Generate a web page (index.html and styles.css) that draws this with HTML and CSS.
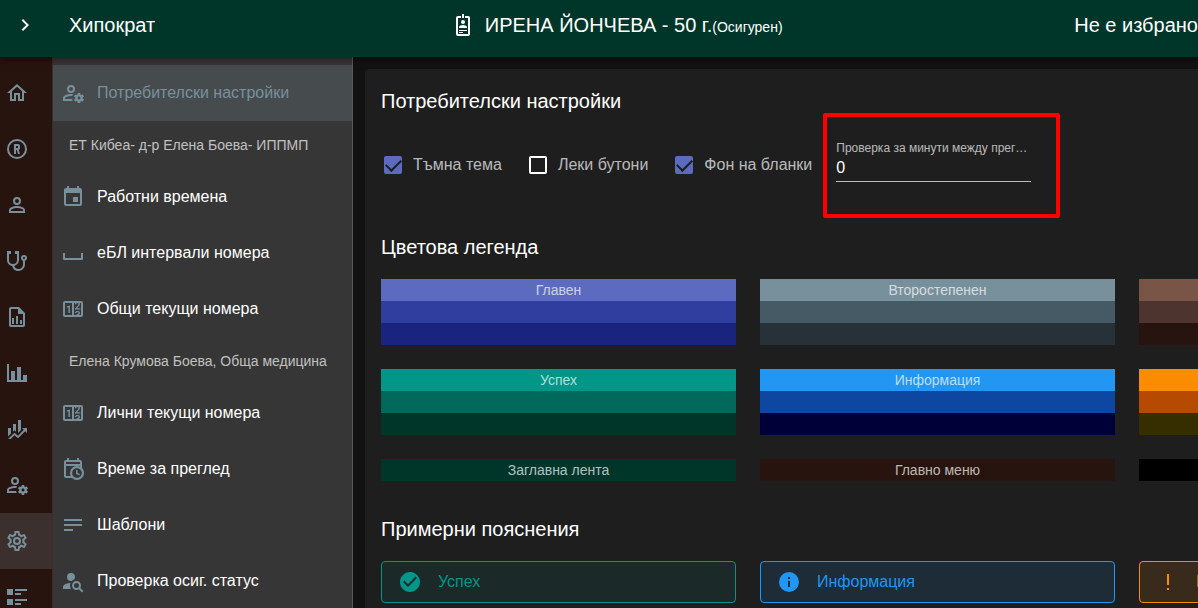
FILE: index.html
```html
<!DOCTYPE html>
<html lang="bg">
<head>
    <meta charset="UTF-8">
    <meta name="viewport" content="width=device-width, initial-scale=1.0">
    <title>Хипократ</title>
    <link rel="stylesheet" href="styles.css">
</head>
<body>
    <header class="app-bar">
        <button type="button" class="menu-toggle" aria-label="Меню">
            <svg class="icon" viewBox="0 0 24 24"><path d="M8.59,16.58L13.17,12L8.59,7.41L10,6L16,12L10,18L8.59,16.58Z"/></svg>
        </button>
        <div class="app-title">Хипократ</div>
        <div class="patient">
            <svg class="icon" viewBox="0 0 24 24"><path d="M17,3H14V5H17V21H7V5H10V3H7A2,2 0 0,0 5,5V21A2,2 0 0,0 7,23H17A2,2 0 0,0 19,21V5A2,2 0 0,0 17,3M12,7A2,2 0 0,1 14,9A2,2 0 0,1 12,11A2,2 0 0,1 10,9A2,2 0 0,1 12,7M16,15H8V14C8,12.67 10.67,12 12,12C13.33,12 16,12.67 16,14V15M16,18H8V17H16V18M12,20H8V19H12V20M13,5H11V1H13V5Z"/></svg>
            <span>ИРЕНА ЙОНЧЕВА - 50 г.<small>(Осигурен)</small></span>
        </div>
        <div class="status">Не е избрано</div>
    </header>

    <div class="layout">
        <nav class="rail">
            <a href="#" aria-label="Начало"><svg class="icon" viewBox="0 0 24 24"><path d="M12 5.69L17 10.19V18H15V12H9V18H7V10.19L12 5.69M12 3L2 12H5V20H11V14H13V20H19V12H22L12 3Z"/></svg></a>
            <a href="#" aria-label="Регистър"><svg class="icon" viewBox="0 0 24 24"><path d="M12,2A10,10 0 0,1 22,12A10,10 0 0,1 12,22A10,10 0 0,1 2,12A10,10 0 0,1 12,2M12,4A8,8 0 0,0 4,12A8,8 0 0,0 12,20A8,8 0 0,0 20,12A8,8 0 0,0 12,4M9,7H13A2,2 0 0,1 15,9V11C15,11.84 14.5,12.55 13.76,12.85L15,17H13L11.8,13H11V17H9V7M11,9V11H13V9H11Z"/></svg></a>
            <a href="#" aria-label="Пациент"><svg class="icon" viewBox="0 0 24 24"><path d="M12,4A4,4 0 0,1 16,8A4,4 0 0,1 12,12A4,4 0 0,1 8,8A4,4 0 0,1 12,4M12,6A2,2 0 0,0 10,8A2,2 0 0,0 12,10A2,2 0 0,0 14,8A2,2 0 0,0 12,6M12,13C14.67,13 20,14.33 20,17V20H4V17C4,14.33 9.33,13 12,13M12,14.9C9.03,14.9 5.9,16.36 5.9,17V18.1H18.1V17C18.1,16.36 14.97,14.9 12,14.9Z"/></svg></a>
            <a href="#" aria-label="Прегледи"><svg class="icon" viewBox="0 0 24 24"><path d="M19,8C19.56,8 20,8.43 20,9A1,1 0 0,1 19,10C18.43,10 18,9.55 18,9C18,8.43 18.43,8 19,8M2,2V11C2,13.96 4.19,16.5 7.14,16.91C7.76,19.92 10.42,22 13.5,22A6.5,6.5 0 0,0 20,15.5V11.81C21.16,11.39 22,10.29 22,9A3,3 0 0,0 19,6A3,3 0 0,0 16,9C16,10.29 16.84,11.4 18,11.81V15.41C18,17.91 16,19.91 13.5,19.91C11.5,19.91 9.82,18.7 9.22,16.9C12,16.3 14,13.8 14,11V2H10V5H12V11A4,4 0 0,1 8,15A4,4 0 0,1 4,11V5H6V2H2Z"/></svg></a>
            <a href="#" aria-label="Отчети"><svg class="icon" viewBox="0 0 24 24"><path d="M14 2H6C4.89 2 4 2.9 4 4V20C4 21.11 4.89 22 6 22H18C19.11 22 20 21.11 20 20V8L14 2M18 20H6V4H13V9H18V20M9 13V19H7V13H9M15 15V19H17V15H15M11 11V19H13V11H11Z"/></svg></a>
            <a href="#" aria-label="Статистика"><svg class="icon" viewBox="0 0 24 24"><path d="M22,21H2V3H4V19H6V10H10V19H12V6H16V19H18V14H22V21Z"/></svg></a>
            <a href="#" aria-label="Финанси"><svg class="icon" viewBox="0 0 24 24"><path d="M6,16.5L3,19.44V11H6M11,14.66L9.43,13.32L8,14.64V7H11M16,13L13,16V3H16M18.81,12.81L17,11H22V16L20.21,14.21L13,21.36L9.53,18.34L5.75,22H3L9.47,15.66L13,18.64"/></svg></a>
            <a href="#" aria-label="Потребители"><svg class="icon" viewBox="0 0 24 24"><use href="#account-cog"/></svg></a>
            <a href="#" class="active" aria-label="Настройки"><svg class="icon" viewBox="0 0 24 24"><path d="M12,8A4,4 0 0,1 16,12A4,4 0 0,1 12,16A4,4 0 0,1 8,12A4,4 0 0,1 12,8M12,10A2,2 0 0,0 10,12A2,2 0 0,0 12,14A2,2 0 0,0 14,12A2,2 0 0,0 12,10M10,22C9.75,22 9.54,21.82 9.5,21.58L9.13,18.93C8.5,18.68 7.96,18.34 7.44,17.94L4.95,18.95C4.73,19.03 4.46,18.95 4.34,18.73L2.34,15.27C2.21,15.05 2.27,14.78 2.46,14.63L4.57,12.97L4.5,12L4.57,11L2.46,9.37C2.27,9.22 2.21,8.95 2.34,8.73L4.34,5.27C4.46,5.05 4.73,4.96 4.95,5.05L7.44,6.05C7.96,5.66 8.5,5.32 9.13,5.07L9.5,2.42C9.54,2.18 9.75,2 10,2H14C14.25,2 14.46,2.18 14.5,2.42L14.87,5.07C15.5,5.32 16.04,5.66 16.56,6.05L19.05,5.05C19.27,4.96 19.54,5.05 19.66,5.27L21.66,8.73C21.79,8.95 21.73,9.22 21.54,9.37L19.43,11L19.5,12L19.43,13L21.54,14.63C21.73,14.78 21.79,15.05 21.66,15.27L19.66,18.73C19.54,18.95 19.27,19.04 19.05,18.95L16.56,17.95C16.04,18.34 15.5,18.68 14.87,18.93L14.5,21.58C14.46,21.82 14.25,22 14,22H10M11.25,4L10.88,6.61C9.68,6.86 8.62,7.5 7.85,8.39L5.44,7.35L4.69,8.65L6.8,10.2C6.4,11.37 6.4,12.64 6.8,13.8L4.68,15.36L5.43,16.66L7.86,15.62C8.63,16.5 9.68,17.14 10.87,17.38L11.24,20H12.76L13.13,17.39C14.32,17.14 15.37,16.5 16.14,15.62L18.57,16.66L19.32,15.36L17.2,13.81C17.6,12.64 17.6,11.37 17.2,10.2L19.31,8.65L18.56,7.35L16.15,8.39C15.38,7.5 14.32,6.86 13.12,6.62L12.75,4H11.25Z"/></svg></a>
            <a href="#" aria-label="Списъци"><svg class="icon" viewBox="0 0 24 24"><path d="M2 14H8V20H2M16 8H10V10H16M2 10H8V4H2M10 4V6H22V4M10 20H16V18H10M10 16H22V14H10"/></svg></a>
        </nav>

        <nav class="panel">
            <a href="#" class="active">
                <svg class="icon" viewBox="0 0 24 24"><path id="account-cog" d="M10 4A4 4 0 0 0 6 8A4 4 0 0 0 10 12A4 4 0 0 0 14 8A4 4 0 0 0 10 4M10 6A2 2 0 0 1 12 8A2 2 0 0 1 10 10A2 2 0 0 1 8 8A2 2 0 0 1 10 6M17 12C16.84 12 16.76 12.08 16.76 12.21L16.5 13.55C16.25 13.68 15.96 13.84 15.72 14L14.44 13.5C14.36 13.5 14.2 13.5 14.12 13.6L13.16 15.36C13.08 15.44 13.08 15.6 13.24 15.68L14.28 16.5V17.5L13.24 18.32C13.16 18.4 13.08 18.56 13.16 18.64L14.12 20.4C14.2 20.5 14.36 20.5 14.44 20.5L15.72 20C15.96 20.16 16.25 20.32 16.5 20.45L16.76 21.79C16.76 21.92 16.84 22 17 22H19C19.08 22 19.24 21.92 19.24 21.79L19.4 20.45C19.72 20.32 20.04 20.16 20.28 20L21.5 20.5C21.64 20.5 21.8 20.5 21.8 20.4L22.84 18.64C22.92 18.56 22.84 18.4 22.76 18.32L21.72 17.5V16.5L22.76 15.68C22.84 15.6 22.92 15.44 22.84 15.36L21.8 13.6C21.8 13.5 21.64 13.5 21.5 13.5L20.28 14C20.04 13.84 19.72 13.68 19.4 13.55L19.24 12.21C19.24 12.08 19.08 12 19 12H17M10 13C7.33 13 2 14.33 2 17V20H11.67C11.39 19.41 11.19 18.77 11.09 18.1H3.9V17C3.9 16.36 7.03 14.9 10 14.9C10.43 14.9 10.87 14.94 11.3 15C11.5 14.36 11.77 13.76 12.12 13.21C11.34 13.08 10.6 13 10 13M18.04 15.5C18.84 15.5 19.5 16.16 19.5 17.04C19.5 17.84 18.84 18.5 18.04 18.5C17.16 18.5 16.5 17.84 16.5 17.04C16.5 16.16 17.16 15.5 18.04 15.5Z"/></svg>
                Потребителски настройки
            </a>
            <div class="subheader">ЕТ Кибеа- д-р Елена Боева- ИППМП</div>
            <a href="#">
                <svg class="icon" viewBox="0 0 24 24"><path d="M19,19H5V8H19M16,1V3H8V1H6V3H5C3.89,3 3,3.89 3,5V19A2,2 0 0,0 5,21H19A2,2 0 0,0 21,19V5C21,3.89 20.1,3 19,3H18V1M17,12H12V17H17V12Z"/></svg>
                Работни времена
            </a>
            <a href="#">
                <svg class="icon" viewBox="0 0 24 24"><path d="M2 12H4V17H20V12H22V18A1 1 0 0 1 21 19H3A1 1 0 0 1 2 18Z"/></svg>
                еБЛ интервали номера
            </a>
            <a href="#">
                <svg class="icon" viewBox="0 0 24 24"><path id="counter" d="M4,4H20A2,2 0 0,1 22,6V18A2,2 0 0,1 20,20H4A2,2 0 0,1 2,18V6A2,2 0 0,1 4,4M4,6V18H11V6H4M20,18V6H18.76C19,6.54 18.95,7.07 18.95,7.13C18.88,7.8 18.41,8.5 18.24,8.75L15.91,11.3L19.23,11.28L19.24,12.5L14.04,12.47L14,11.47C14,11.47 17.05,8.24 17.2,7.95C17.34,7.67 17.91,6 16.5,6C15.27,6.05 15.41,7.3 15.41,7.3L13.87,7.31C13.87,7.31 13.88,6.65 14.25,6H13V18H15.58L15.57,17.14L16.54,17.13C16.54,17.13 17.45,16.97 17.46,16.08C17.5,15.08 16.65,15.08 16.5,15.08C16.37,15.08 15.43,15.13 15.43,15.95H13.91C13.91,15.95 13.95,13.89 16.5,13.89C19.1,13.89 18.96,15.91 18.96,15.91C18.96,15.91 19,17.16 17.85,17.63L18.37,18H20M8.92,16H7.42V10.2L5.62,10.76V9.53L8.76,8.41H8.92V16Z"/></svg>
                Общи текущи номера
            </a>
            <div class="subheader">Елена Крумова Боева, Обща медицина</div>
            <a href="#">
                <svg class="icon" viewBox="0 0 24 24"><use href="#counter"/></svg>
                Лични текущи номера
            </a>
            <a href="#">
                <svg class="icon" viewBox="0 0 24 24"><path fill-rule="evenodd" d="M15,13H16.5V15.82L18.94,17.23L18.19,18.53L15,16.69V13M5,5V7H19V5H5M19,9H5V19H9.67C9.24,18.09 9,17.07 9,16A7,7 0 0,1 16,9C17.07,9 18.09,9.24 19,9.67V9M5,21C3.89,21 3,20.1 3,19V5C3,3.89 3.89,3 5,3H6V1H8V3H16V1H18V3H19A2,2 0 0,1 21,5V11.1C22.24,12.36 23,14.09 23,16A7,7 0 0,1 16,23C14.09,23 12.36,22.24 11.1,21H5M16,11.15A4.85,4.85 0 0,0 11.15,16C11.15,18.68 13.32,20.85 16,20.85A4.85,4.85 0 0,0 20.85,16C20.85,13.32 18.68,11.15 16,11.15Z"/></svg>
                Време за преглед
            </a>
            <a href="#">
                <svg class="icon" viewBox="0 0 24 24"><path d="M3 6H21V8H3ZM3 11H21V13H3ZM3 16H12V18H3Z"/></svg>
                Шаблони
            </a>
            <a href="#">
                <svg class="icon" viewBox="0 0 24 24"><path d="M15.5,12C18,12 20,14 20,16.5C20,17.38 19.75,18.21 19.31,18.9L22.39,22L21,23.39L17.88,20.32C17.19,20.75 16.37,21 15.5,21C13,21 11,19 11,16.5C11,14 13,12 15.5,12M15.5,14A2.5,2.5 0 0,0 13,16.5A2.5,2.5 0 0,0 15.5,19A2.5,2.5 0 0,0 18,16.5A2.5,2.5 0 0,0 15.5,14M10,4A4,4 0 0,1 14,8C14,8.91 13.69,9.75 13.18,10.43C12.32,10.75 11.55,11.26 10.91,11.9L10,12A4,4 0 0,1 6,8A4,4 0 0,1 10,4M2,20V18C2,15.88 5.31,14.14 9.5,14C9.18,14.78 9,15.62 9,16.5C9,17.79 9.38,19 10,20H2Z"/></svg>
                Проверка осиг. статус
            </a>
        </nav>

        <main class="content">
            <div class="card">
                <section>
                    <h2>Потребителски настройки</h2>
                    <div class="options">
                        <label class="check"><input type="checkbox" checked> Тъмна тема</label>
                        <label class="check"><input type="checkbox"> Леки бутони</label>
                        <label class="check"><input type="checkbox" checked> Фон на бланки</label>
                        <div class="field highlight">
                            <label for="minutes">Проверка за минути между прегледи</label>
                            <input type="text" id="minutes" value="0">
                        </div>
                    </div>
                </section>

                <section>
                    <h2>Цветова легенда</h2>
                    <div class="grid">
                        <div class="swatch primary"><div>Главен</div><div></div><div></div></div>
                        <div class="swatch secondary"><div>Второстепенен</div><div></div><div></div></div>
                        <div class="swatch accent"><div></div><div></div><div></div></div>
                        <div class="swatch success"><div>Успех</div><div></div><div></div></div>
                        <div class="swatch info"><div>Информация</div><div></div><div></div></div>
                        <div class="swatch warning"><div></div><div></div><div></div></div>
                        <div class="swatch bar"><div>Заглавна лента</div></div>
                        <div class="swatch menu"><div>Главно меню</div></div>
                        <div class="swatch black"><div></div></div>
                    </div>
                </section>

                <section>
                    <h2>Примерни пояснения</h2>
                    <div class="grid">
                        <div class="alert alert-success">
                            <svg class="icon" viewBox="0 0 24 24"><path d="M12 2C6.5 2 2 6.5 2 12S6.5 22 12 22 22 17.5 22 12 17.5 2 12 2M10 17L5 12L6.41 10.59L10 14.17L17.59 6.58L19 8L10 17Z"/></svg>
                            Успех
                        </div>
                        <div class="alert alert-info">
                            <svg class="icon" viewBox="0 0 24 24"><path d="M13,9H11V7H13M13,17H11V11H13M12,2A10,10 0 0,0 2,12A10,10 0 0,0 12,22A10,10 0 0,0 22,12A10,10 0 0,0 12,2Z"/></svg>
                            Информация
                        </div>
                        <div class="alert alert-warning">
                            <svg class="icon" viewBox="0 0 24 24"><path d="M11,4H13V15H11V4M13,18V20H11V18H13Z"/></svg>
                            Внимание
                        </div>
                    </div>
                </section>
            </div>
        </main>
    </div>
</body>
</html>
```
FILE: styles.css
```css
* {
    box-sizing: border-box;
}
body {
    margin: 0;
    height: 100vh;
    display: flex;
    flex-direction: column;
    overflow: hidden;
    background-color: #121212;
    color: #ffffff;
    font-family: "Liberation Sans", Arial, sans-serif;
    font-size: 16px;
    line-height: 24px;
}
a {
    color: inherit;
    text-decoration: none;
}
.icon {
    width: 24px;
    height: 24px;
    flex: none;
    fill: currentColor;
}

/* Top bar */
.app-bar {
    position: relative;
    z-index: 1;
    flex: none;
    height: 57px;
    padding: 0 0 7px 13px;
    display: flex;
    align-items: center;
    justify-content: space-between;
    background-color: #003629;
    box-shadow: 0 2px 8px rgba(0, 0, 0, 0.5);
    font-size: 20px;
    white-space: nowrap;
}
.menu-toggle {
    display: flex;
    padding: 0;
    margin-right: 32px;
    border: none;
    background: none;
    color: inherit;
    cursor: pointer;
}
.app-title {
    margin-right: auto;
}
.patient {
    display: flex;
    align-items: center;
    gap: 10px;
    margin-right: auto;
    padding-left: 4px;
}
.patient small {
    font-size: 14px;
    line-height: 14px;
}

.layout {
    flex: 1;
    min-height: 0;
    display: flex;
}

/* Icon rail */
.rail {
    flex: none;
    width: 53px;
    padding-top: 8px;
    overflow: hidden;
    background-color: #27140e;
    border-right: 1px solid #3d2c27;
    color: #78909c;
}
.rail a {
    display: flex;
    align-items: center;
    height: 56px;
    padding-left: 5px;
}
.rail .active {
    background-color: #3b302d;
}

/* Settings menu */
.panel {
    flex: none;
    width: 300px;
    padding-top: 8px;
    overflow: hidden;
    background-color: #363636;
    border-right: 1px solid #5a5a5a;
}
.panel a {
    display: flex;
    align-items: center;
    gap: 12px;
    height: 56px;
    padding: 0 8px;
}
.panel .icon {
    color: #78909c;
}
.panel .active {
    background-color: #464b4d;
    color: #78909c;
}
.subheader {
    height: 48px;
    padding: 0 16px;
    line-height: 48px;
    font-size: 14px;
    color: rgba(255, 255, 255, 0.7);
}

/* Content */
.content {
    flex: 1;
    min-width: 0;
    padding: 12px;
    overflow: hidden;
}
.card {
    min-width: max-content;
    padding: 16px;
    display: flex;
    flex-direction: column;
    gap: 32px;
    background-color: #1e1e1e;
    border-radius: 4px;
}
h2 {
    margin: 0 0 16px;
    font-size: 20px;
    font-weight: normal;
    line-height: 32px;
}
.options {
    display: flex;
    gap: 24px;
    padding: 8px 0 10px;
}
.check {
    display: flex;
    align-items: center;
    gap: 11px;
    height: 48px;
    padding-left: 3px;
    color: rgba(255, 255, 255, 0.7);
}
.check input {
    appearance: none;
    display: grid;
    place-items: center;
    width: 18px;
    height: 18px;
    margin: 0;
    border: 2px solid #ffffff;
    border-radius: 2px;
}
.check input:checked {
    border-color: #5c6bc0;
    background-color: #5c6bc0;
}
/* Tick: two sides of a wide box turned by 45 degrees */
.check input:checked::after {
    content: "";
    width: 13px;
    height: 7px;
    margin-bottom: 4px;
    border: solid #1e1e1e;
    border-width: 0 0 2px 2px;
    transform: rotate(-45deg);
}
.field {
    position: relative;
    width: 195px;
}
.field label {
    display: block;
    overflow: hidden;
    text-overflow: ellipsis;
    white-space: nowrap;
    font-size: 12px;
    line-height: 14px;
    color: rgba(255, 255, 255, 0.7);
}
.field input {
    display: block;
    width: 100%;
    height: 27px;
    padding: 0;
    border: none;
    border-bottom: 1px solid rgba(255, 255, 255, 0.7);
    background: none;
    color: #ffffff;
    font: inherit;
}
/* Red frame around the field */
.highlight::after {
    content: "";
    position: absolute;
    inset: -28px -29px -29px -13px;
    border: 4px solid #ff0000;
    border-radius: 2px;
    pointer-events: none;
}

.grid {
    display: grid;
    grid-template-columns: repeat(3, minmax(355px, 1fr));
    gap: 24px;
}
.swatch div {
    height: 22px;
    line-height: 22px;
    font-size: 14px;
    text-align: center;
    color: rgba(255, 255, 255, 0.7);
}
.primary div { background-color: #5c6bc0; }
.primary div:nth-child(2) { background-color: #303f9f; }
.primary div:nth-child(3) { background-color: #1a237e; }
.secondary div { background-color: #78909c; }
.secondary div:nth-child(2) { background-color: #455a64; }
.secondary div:nth-child(3) { background-color: #263238; }
.accent div { background-color: #795548; }
.accent div:nth-child(2) { background-color: #4e342e; }
.accent div:nth-child(3) { background-color: #27140e; }
.success div { background-color: #009688; }
.success div:nth-child(2) { background-color: #00695c; }
.success div:nth-child(3) { background-color: #003629; }
.info div { background-color: #2196f3; }
.info div:nth-child(2) { background-color: #0d47a1; }
.info div:nth-child(3) { background-color: #000038; }
.warning div { background-color: #fb8c00; }
.warning div:nth-child(2) { background-color: #b54a00; }
.warning div:nth-child(3) { background-color: #372e00; }
.bar div { background-color: #003629; }
.menu div { background-color: #27140e; }
.black div { background-color: #000000; }

.alert {
    display: flex;
    align-items: center;
    gap: 16px;
    padding: 8px 16px;
    border: 1px solid;
    border-radius: 4px;
}
.alert-success {
    color: #009688;
    background-color: #1b2a29;
}
.alert-info {
    color: #2196f3;
    background-color: #1e2c37;
}
.alert-warning {
    color: #fb8c00;
    background-color: #382b1b;
}
```
